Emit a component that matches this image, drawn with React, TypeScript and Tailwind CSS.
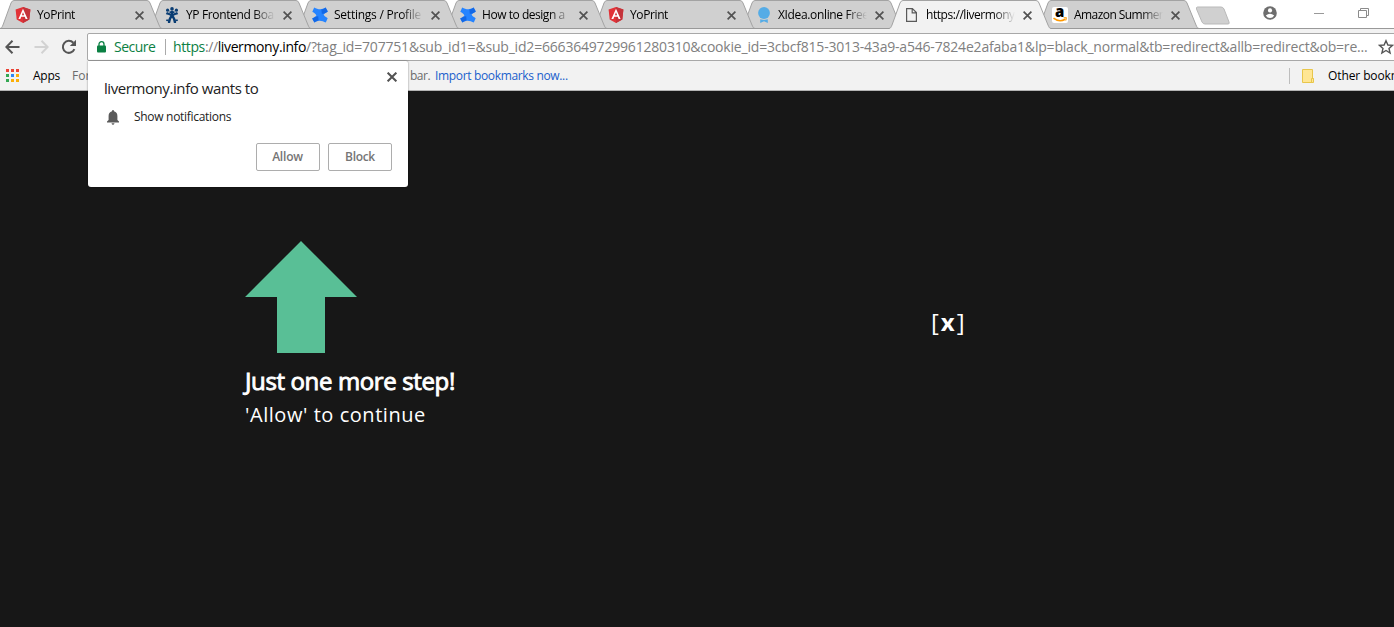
import type { ReactNode } from "react";

const Angular = () => (
  <svg width="16" height="16" viewBox="0 0 16 16">
    <path d="M8 0 15.4 2.6 14.3 12.4 8 16 1.7 12.4.6 2.6Z" fill="#e23237" />
    <path d="M8 0 15.4 2.6 14.3 12.4 8 16Z" fill="#c4333a" />
    <path d="M8 1.8 3.4 12H5.4L6.2 9.8H9.8L10.6 12H12.6ZM8 5.3 9.1 8.2H6.9Z" fill="#fff" fillRule="evenodd" />
  </svg>
);

const Jira = () => (
  <svg width="16" height="16" viewBox="0 0 16 16" fill="none" stroke="#0a3d73" strokeWidth="2.2">
    <circle cx="8" cy="1.9" r="1.8" fill="#0a3d73" stroke="none" />
    <circle cx="3.6" cy="3.2" r="1.6" fill="#0a3d73" stroke="none" />
    <circle cx="12.4" cy="3.2" r="1.6" fill="#0a3d73" stroke="none" />
    <path d="M2.4 6C4.2 7 6 6.8 8 8.8 10.8 11.2 11 13 11 16" />
    <path d="M13.6 6C11.8 7 10 6.8 8 8.8 5.2 11.2 5 13 5 16" />
    <path d="M5.5 5.2H10.5M8 4V9" strokeWidth="2" />
    <path d="M2.2 13.2 4.6 13.4M13.8 13.2 11.4 13.4" strokeWidth="1.6" />
  </svg>
);

const Confluence = () => (
  <svg width="16" height="16" viewBox="0 0 16 16">
    <path d="M.3 4.8 2.2.4C5.4 2 9 3.6 13.6.6L15.8 4.4C13.6 5.9 12.2 6.8 11.6 7.6 11.9 8.9 14 10.2 15.7 11.2L13.8 15.6C10.6 14 7 12.4 2.4 15.4L.2 11.6C2.4 10.1 3.8 9.2 4.4 8.4 4.1 7.1 2 5.8.3 4.8Z" fill="#2684ff" />
    <path d="M9.4 2.6C11 2.4 12.4 1.5 13.6.6L15.8 4.4C13.8 5.8 11.8 6.8 9.8 6.8ZM6.6 13.4C5 13.6 3.6 14.5 2.4 15.4L.2 11.6C2.2 10.2 4.2 9.2 6.2 9.2Z" fill="#1368e6" />
  </svg>
);

const Ribbon = () => (
  <svg width="16" height="16" viewBox="0 0 16 16" fill="#55ace6">
    <circle cx="8" cy="6" r="5.9" />
    <path d="M4.2 12.2 8 13 11.8 12.2V16L8 14.2 4.2 16Z" />
  </svg>
);

const Page = () => (
  <svg width="16" height="16" viewBox="0 0 16 16" fill="none" stroke="#5a5a5a" strokeWidth="1.2">
    <path d="M2.6 1.6H8.4L12.4 5.6V14.4H2.6ZM8.2 1.6V5.8H12.4" />
  </svg>
);

const Amazon = () => (
  <span className="relative block size-4 rounded-[2px] bg-white">
    <span className="absolute left-[3px] top-[-4px] font-['Open_Sans',sans-serif] text-[15px] font-extrabold leading-[17px] text-black">a</span>
    <svg className="absolute inset-0" width="16" height="16" viewBox="0 0 16 16" fill="none" stroke="#f90" strokeWidth="1.6">
      <path d="M1.5 11.2Q7.4 15.8 13.2 12.2" />
      <path d="M11.6 10.8H14.2Q14.4 12 13.6 13.6" strokeWidth="1.1" />
    </svg>
  </span>
);

const Cross = ({ size = 9, width = 1.7 }: { size?: number; width?: number }) => (
  <svg width={size} height={size} viewBox="0 0 9 9" fill="none" stroke="#525252" strokeWidth={width}>
    <path d="M.6.6 8.4 8.4M8.4.6.6 8.4" />
  </svg>
);

type TabInfo = { title: string; icon: ReactNode; place: string; text: string; active?: boolean };

const tabs: TabInfo[] = [
  { title: "YoPrint", icon: <Angular />, place: "z-[9] -mr-[13px]", text: "w-[90px] tracking-[-0.39px]" },
  { title: "YP Frontend Boa", icon: <Jira />, place: "z-[8] -mr-[14px]", text: "w-[89px] tracking-[-0.36px]" },
  { title: "Settings / Profile", icon: <Confluence />, place: "z-[7] -mr-[14px]", text: "w-[89px] tracking-[-0.24px]" },
  { title: "How to design a", icon: <Confluence />, place: "z-[6] -mr-[14px]", text: "w-[89px] tracking-[-0.46px]" },
  { title: "YoPrint", icon: <Angular />, place: "z-[5] -mr-[14px]", text: "w-[89px] tracking-[-0.39px]" },
  { title: "XIdea.online Free", icon: <Ribbon />, place: "z-[4] -mr-[14px]", text: "w-[89px] tracking-[-0.35px]" },
  { title: "https://livermony", icon: <Page />, place: "z-10 -mr-[14px]", text: "w-[89px] tracking-[-0.45px]", active: true },
  { title: "Amazon Summer", icon: <Amazon />, place: "z-[2] -mr-[14px]", text: "w-[89px] tracking-[-0.56px]" },
];

function Tab({ title, icon, place, text, active }: TabInfo) {
  return (
    <div className={`relative flex h-[29px] w-[162px] shrink-0 items-center pl-[15px] ${place}`}>
      <svg className="absolute inset-0" width="162" height="29" viewBox="0 0 162 29" fill="none">
        <path d="M0 29C2 28 2 27 3 25L11 3Q12 .5 14 .5H147Q149 .5 150 3L159 25C160 27 160 28 162 29Z" fill={active ? "#f2f2f2" : "#d0d0d0"} />
        <path d="M0 28.5C2 28 2 27 3 25L11 3Q12 .5 14 .5H147Q149 .5 150 3L159 25C160 27 160 28 162 28.5" stroke="#a3a3a3" />
        {!active && <path d="M0 28.5H162" stroke="#999" />}
      </svg>
      <span className="relative mt-px">{icon}</span>
      <span className={`relative ml-[6px] overflow-hidden whitespace-nowrap text-xs text-black [mask-image:linear-gradient(to_right,black_76%,transparent)] ${text}`}>{title}</span>
      <span className="relative ml-[8px] mt-px"><Cross /></span>
    </div>
  );
}

const appColors = ["bg-[#ea4335]", "bg-[#ea4335]", "bg-[#ea4335]", "bg-[#34a853]", "bg-[#2f86f5]", "bg-[#fbaf08]", "bg-[#34a853]", "bg-[#fbaf08]", "bg-[#fbaf08]"];

export default function App() {
  return (
    <div className="relative flex h-[627px] w-full flex-col overflow-hidden bg-[#171717] font-['Open_Sans','Noto_Sans',sans-serif]">
      <header className="flex h-[91px] shrink-0 flex-col border-b border-[#b3b3b3] bg-[#f2f2f2]">
        <div className="relative flex h-[29px] shrink-0 bg-white">
          <span className="absolute inset-x-0 bottom-0 h-px bg-[#999]" />
          {tabs.map((tab, i) => <Tab key={i} {...tab} />)}
          <svg className="ml-[10px] mt-[6px] shrink-0" width="36" height="20" viewBox="0 0 36 20">
            <path d="M2.5 1H26Q28 1 29 3L34 16Q34.8 18 33 18H10Q8 18 7 16L1.5 3Q1 1 2.5 1Z" fill="#d0d0d0" stroke="#b9b9b9" />
          </svg>
          <svg className="ml-[32px] mt-[6px] shrink-0" width="14" height="14" viewBox="0 0 14 14">
            <circle cx="7" cy="7" r="6.8" fill="#6e6e6e" />
            <circle cx="7" cy="4.4" r="2.1" fill="#fff" />
            <path d="M2.8 9.4Q7 6.2 11.2 9.4Q9.7 11.9 7 11.9T2.8 9.4Z" fill="#fff" />
          </svg>
          <span className="ml-[37px] mt-[13px] h-px w-[10px] shrink-0 bg-[#999]" />
          <svg className="ml-[34px] mt-[8px] shrink-0" width="11" height="11" viewBox="0 0 11 11" fill="none" stroke="#8b8b8b">
            <path d="M.5 2.5H8.5V9.5H.5ZM2.5 2.5V.5H10.5V7.5H8.5" />
          </svg>
        </div>

        <div className="mt-1 flex h-[28px] shrink-0 items-center">
          <svg className="ml-[5px] shrink-0" width="15" height="14" viewBox="0 0 15 14" fill="none" stroke="#555" strokeWidth="2">
            <path d="M14.5 7H1.5M7.5 .8 1.3 7 7.5 13.2" />
          </svg>
          <svg className="ml-[14px] shrink-0" width="15" height="14" viewBox="0 0 15 14" fill="none" stroke="#d2d2d2" strokeWidth="2">
            <path d="M.5 7H13.5M7.5 .8 13.7 7 7.5 13.2" />
          </svg>
          <svg className="ml-[12px] shrink-0" width="16" height="16" viewBox="0 0 16 16">
            <path d="M13.4 10.2A6 6 0 1 1 12.3 3.8" fill="none" stroke="#555" strokeWidth="2" />
            <path d="M15 .8V7H8.8Z" fill="#555" />
          </svg>
          <div className="ml-[10px] flex h-[28px] w-[1320px] shrink-0 items-center rounded-l-[2px] border border-[#a8a8a8] bg-white text-sm">
            <svg className="ml-[9px] shrink-0" width="9" height="12" viewBox="0 0 9 12">
              <path d="M2 5V3.2a2.5 2.5 0 0 1 5 0V5" fill="none" stroke="#0b8043" strokeWidth="1.3" />
              <rect y="4.4" width="9" height="7" rx="1" fill="#0b8043" />
            </svg>
            <span className="ml-[8px] w-[51px] whitespace-nowrap tracking-[-0.5px] text-[#0b8043]">Secure</span>
            <span className="h-4 w-px bg-[#aaa]" />
            <span className="ml-[7px] flex whitespace-nowrap">
              <span className="tracking-[-0.38px] text-[#0b8043]">https</span>
              <span className="tracking-[-0.38px] text-[#808080]">://</span>
              <span className="tracking-[-0.38px] text-black">livermony.info</span>
              <span className="tracking-[-0.193px] text-[#808080]">/?tag_id=707751&amp;sub_id1=&amp;sub_id2=6663649729961280310&amp;cookie_id=3cbcf815-3013-43a9-a546-7824e2afaba1&amp;lp=black_normal&amp;tb=redirect&amp;allb=redirect&amp;ob=re...</span>
            </span>
            <svg className="ml-[10px] shrink-0" width="16" height="16" viewBox="0 0 16 16" fill="none" stroke="#555" strokeWidth="1.4">
              <path d="M8 1.7 9.9 6 14.5 6.4 11 9.4 12.1 14 8 11.5 3.9 14 5 9.4 1.5 6.4 6.1 6Z" />
            </svg>
          </div>
        </div>

        <div className="flex h-[29px] shrink-0 items-center whitespace-nowrap text-xs">
          <div className="ml-[6px] grid shrink-0 grid-cols-3 gap-[2px]">
            {appColors.map((color, i) => <span key={i} className={`size-[3px] ${color}`} />)}
          </div>
          <span className="ml-[14px] tracking-[-0.25px] text-black">Apps</span>
          <span className="ml-[12px] mr-[322px] w-4 overflow-hidden text-[#6b6b6b]">For</span>
          <span className="w-[25px] tracking-[-0.5px] text-[#6b6b6b]">bar.</span>
          <span className="tracking-[-0.34px] text-[#1a5fcc]">Import bookmarks now...</span>
          <span className="ml-auto mr-[12px] h-4 w-px bg-[#bdbdbd]" />
          <svg className="shrink-0" width="12" height="14" viewBox="0 0 12 14">
            <path d="M.5.5H10.5V9.5H11.5V13.5H.5Z" fill="#ffe694" stroke="#e8c64b" />
            <path d="M9.5 13V9.5H11.5" fill="none" stroke="#e8c64b" />
          </svg>
          <span className="ml-[14px] w-[66px] overflow-hidden tracking-[-0.1px] text-black">Other bookmarks</span>
        </div>
      </header>

      <main className="flex flex-1 pl-[245px] pt-[150px] text-white">
        <section className="w-[686px]">
          <svg width="112" height="112" viewBox="0 0 112 112">
            <path d="M56 0 112 56H80V112H32V56H0Z" fill="#59bf96" />
          </svg>
          <h1 className="mt-[11px] text-2xl leading-[34px] tracking-[-0.37px] [-webkit-text-stroke:0.9px_white]">Just one more step!</h1>
          <p className="mt-px text-xl leading-[32px] tracking-[0.55px]">'Allow' to continue</p>
        </section>
        <button className="mt-[65px] flex h-8 items-center gap-[2px] text-2xl leading-8">
          <span>[</span><span className="font-bold">x</span><span>]</span>
        </button>
      </main>

      <div role="dialog" className="absolute left-[88px] top-[61px] flex h-[126px] w-[320px] flex-col rounded-b-[3px] rounded-tr-[2px] bg-white pl-4 pr-4 shadow-[0_0_2px_rgba(0,0,0,0.5)]">
        <span className="absolute right-[11px] top-[11px]"><Cross size={10} width={1.8} /></span>
        <h2 className="mt-[16px] text-[15px] leading-[22px] tracking-[-0.42px] text-[#222]">livermony.info wants to</h2>
        <div className="mt-[9px] flex h-[18px] items-center">
          <svg className="ml-[3px] shrink-0" width="12" height="15" viewBox="0 0 12 15" fill="#5a5a5a">
            <path d="M6 0Q7 0 7 1.2C9.4 1.8 10.4 3.6 10.4 6V10L12 11.6V12.4H0V11.6L1.6 10V6C1.6 3.6 2.6 1.8 5 1.2Q5 0 6 0ZM4.5 13.2H7.5Q7.2 14.7 6 14.7T4.5 13.2Z" />
          </svg>
          <span className="ml-[15px] text-xs tracking-[-0.3px] text-[#222]">Show notifications</span>
        </div>
        <div className="mt-[17px] flex justify-end gap-2 text-xs font-semibold tracking-[-0.3px] text-[#757575]">
          <button className="h-7 w-16 rounded-[2px] border border-[#adadad] pr-px tracking-[-0.2px]">Allow</button>
          <button className="h-7 w-16 rounded-[2px] border border-[#adadad]">Block</button>
        </div>
      </div>
    </div>
  );
}
